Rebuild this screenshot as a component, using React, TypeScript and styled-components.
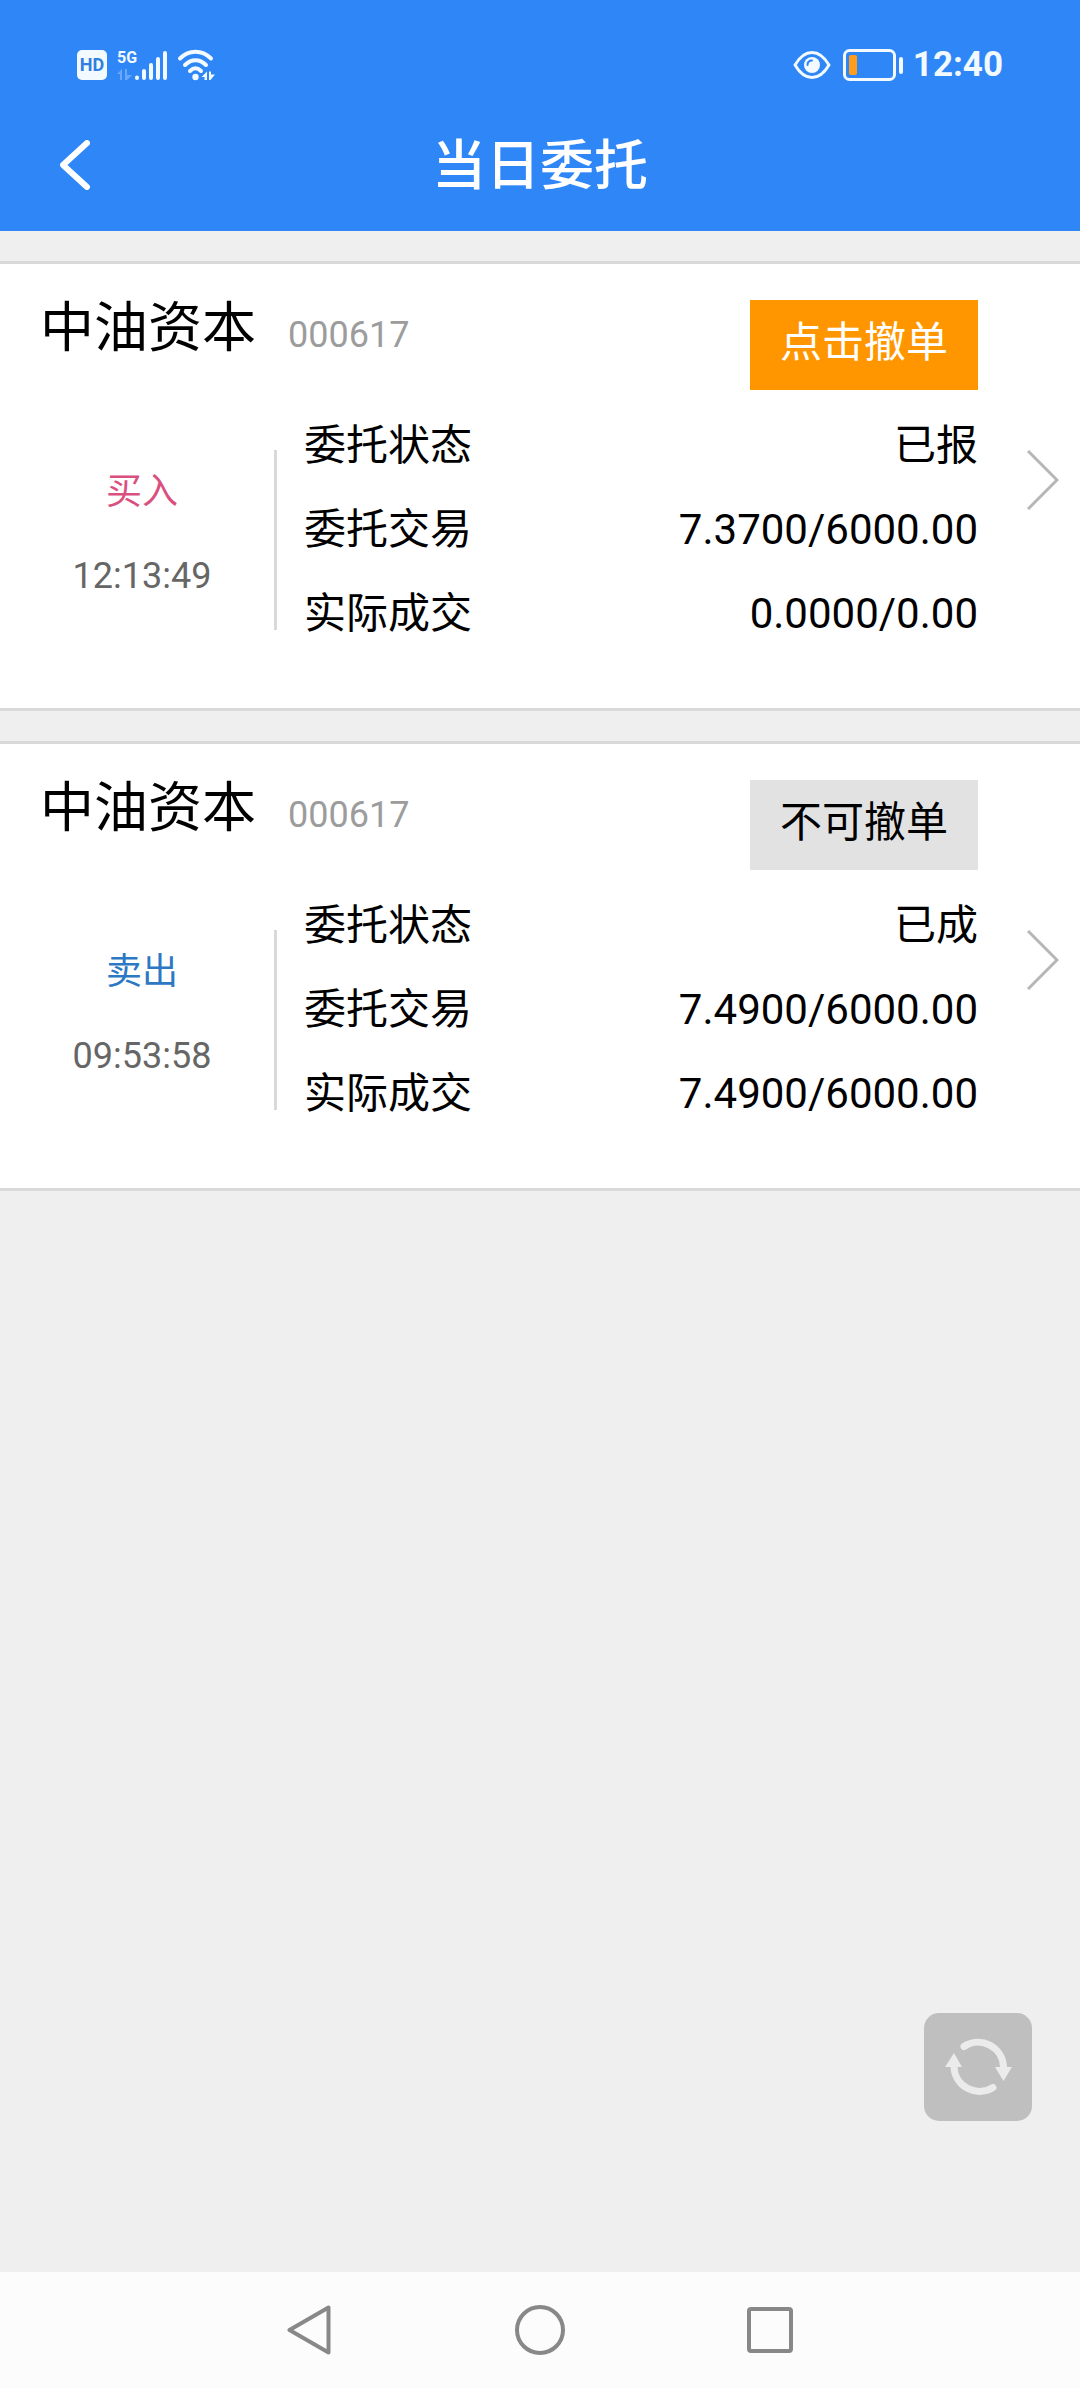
import React from 'react';
import styled, { createGlobalStyle } from 'styled-components';

const GlobalStyle = createGlobalStyle`
  * {
    box-sizing: border-box;
  }

  body {
    margin: 0;
    background: #efefef;
    color: #000;
    font-family: Roboto, 'Noto Sans CJK SC', sans-serif;
  }

  button {
    margin: 0;
    padding: 0;
    border: 0;
    background: none;
    color: inherit;
    font: inherit;
    cursor: pointer;
  }

  svg {
    display: block;
  }
`;

const Screen = styled.div`
  display: flex;
  flex-direction: column;
  min-height: 100vh;
`;

const Header = styled.header`
  background: #2f86f6;
  color: #fff;
`;

const StatusBar = styled.div`
  display: flex;
  align-items: center;
  justify-content: space-between;
  height: 97px;
  padding: 33px 77px 0;
  color: #f2f9ff;
`;

const StatusGroup = styled.div`
  display: flex;
  align-items: center;
  gap: 10px;
`;

const HdBadge = styled.span`
  display: flex;
  align-items: center;
  justify-content: center;
  width: 30px;
  height: 30px;
  border-radius: 5px;
  background: #f2f9ff;
  color: #2f7fe0;
  font-size: 18px;
  font-weight: 700;
  line-height: 30px;
`;

const Clock = styled.time`
  font-size: 35px;
  font-weight: 700;
  line-height: 40px;
`;

const TitleBar = styled.div`
  display: grid;
  grid-template-columns: 1fr auto 1fr;
  align-items: center;
  height: 134px;
  padding: 2px 60px 0;
`;

const BackButton = styled.button`
  justify-self: start;
`;

const Title = styled.h1`
  margin: 0;
  padding-top: 4px;
  font-size: 54px;
  font-weight: 500;
  line-height: 56px;
`;

const OrderList = styled.main`
  display: flex;
  flex: 1;
  flex-direction: column;
  gap: 30px;
  padding: 30px 0;
`;

const Card = styled.article`
  border: solid #d9d9d9;
  border-width: 3px 0;
  background: #fff;
`;

const CardHead = styled.div`
  display: flex;
  align-items: flex-start;
  justify-content: space-between;
  padding: 36px 102px 36px 40px;
`;

const Stock = styled.div`
  display: flex;
  align-items: baseline;
  gap: 32px;
  padding-top: 1px;
`;

const StockName = styled.h2`
  margin: 0;
  font-size: 54px;
  font-weight: 400;
  line-height: 56px;
`;

const StockCode = styled.span`
  color: #9c9c9c;
  font-size: 36px;
  line-height: 40px;
`;

const CancelButton = styled.button`
  height: 90px;
  padding: 0 30px 4px;
  background: #ff9600;
  color: #fff;
  font-size: 42px;
  line-height: 40px;

  &:disabled {
    background: #e2e2e2;
    color: #000;
    cursor: default;
  }
`;

const CardBody = styled.div`
  display: flex;
  align-items: flex-start;
  padding: 0 21px 74px 10px;
`;

const Side = styled.div`
  display: flex;
  flex-direction: column;
  align-items: center;
  gap: 44px;
  width: 264px;
  padding-top: 46px;
  font-size: 36px;
  line-height: 40px;
`;

const Direction = styled.span<{ $side: 'buy' | 'sell' }>`
  color: ${({ $side }) => ($side === 'buy' ? '#d9507f' : '#2d78c4')};
`;

const OrderTime = styled.time`
  color: #666;
`;

const Divider = styled.div`
  width: 3px;
  height: 180px;
  margin-top: 24px;
  background: #d9d9d9;
`;

const Details = styled.dl`
  display: flex;
  flex: 1;
  flex-direction: column;
  gap: 44px;
  margin: 0;
  padding-left: 27px;
  font-size: 42px;
  line-height: 40px;
`;

const Detail = styled.div`
  display: flex;
  justify-content: space-between;
`;

const Value = styled.dd`
  margin: 0;
`;

const OpenButton = styled.button`
  margin: 24px 0 0 49px;
`;

const RefreshButton = styled.button`
  position: fixed;
  right: 48px;
  bottom: 267px;
  width: 108px;
  height: 108px;
  border-radius: 15px;
  background: #bfbfbf;
`;

const SystemNav = styled.nav`
  display: flex;
  justify-content: center;
  height: 116px;
  background: #fcfcfc;
`;

const NavButton = styled.button`
  display: flex;
  align-items: center;
  justify-content: center;
  width: 230px;
`;

const SignalIcon = () => (
  <svg width="50" height="34" viewBox="0 0 50 34" fill="currentColor" aria-label="5G">
    <text x="0" y="15" fontFamily="'Liberation Sans Narrow', Roboto, sans-serif" fontSize="16" fontWeight="700">
      5G
    </text>
    <g opacity="0.3">
      <path d="M0 26 5 21V32H3V26ZM8 21H10V27H15L10 32H8Z" />
    </g>
    <g stroke="currentColor" strokeWidth="4" strokeLinecap="round">
      <path d="M20 29.500V30M27 23V30M34 17V30M41 11V30M48 5V30" />
    </g>
  </svg>
);

const WifiIcon = () => (
  <svg width="40" height="34" viewBox="0 0 40 34" fill="none" stroke="currentColor" aria-label="Wi-Fi">
    <g strokeWidth="4" strokeLinecap="round">
      <path d="M3 10.500C12 1.500 25 1.500 34 10.500" />
      <path d="M8 17C14.500 10.500 22.500 10.500 29 17" />
      <path d="M13 23C16.500 19.500 20.500 19.500 24 23" />
    </g>
    <circle cx="18.500" cy="29" r="3.200" fill="currentColor" stroke="none" />
    <path d="M24.500 29 30 23.500V32H27.500V29ZM32 23.500H34V26.500H38L33.500 32H32Z" fill="currentColor" stroke="none" />
  </svg>
);

const EyeIcon = () => (
  <svg width="40" height="30" viewBox="0 0 40 30" aria-label="护眼模式">
    <path
      d="M2 15C7 6.500 12.500 2.500 19 2.500S31 6.500 36 15C31 23.500 25.500 27.500 19 27.500S7 23.500 2 15Z"
      fill="none"
      stroke="currentColor"
      strokeWidth="3"
      strokeLinejoin="round"
    />
    <circle cx="19" cy="15" r="8" fill="currentColor" />
    <path d="M14.500 15C14.500 12 16.500 10.500 19 10.500" fill="none" stroke="#2f86f6" strokeWidth="2" strokeLinecap="round" />
  </svg>
);

const BatteryIcon = () => (
  <svg width="60" height="32" viewBox="0 0 60 32" aria-label="电量低">
    <rect x="1.500" y="1.500" width="50" height="29" rx="5" fill="none" stroke="currentColor" strokeWidth="3" />
    <rect x="6" y="6" width="8" height="20" rx="2" fill="#ff9c1c" />
    <rect x="56" y="8" width="4" height="17" rx="2" fill="currentColor" />
  </svg>
);

const BackIcon = () => (
  <svg width="30" height="50" viewBox="0 0 30 50" fill="none" stroke="#fff" strokeWidth="6" strokeLinecap="round" strokeLinejoin="round">
    <path d="M27 3 3 25 27 47" />
  </svg>
);

const ChevronIcon = () => (
  <svg width="32" height="60" viewBox="0 0 32 60" fill="none" stroke="#b6b6b6" strokeWidth="3">
    <path d="M1 1 30 30 1 59" />
  </svg>
);

const RefreshIcon = () => (
  <svg width="108" height="108" viewBox="0 0 108 108">
    <g fill="none" stroke="#ebebeb" strokeWidth="7" strokeLinecap="round">
      <path d="M40 33.500A25.500 25.500 0 0 1 79.500 54" />
      <path d="M69 74.500A25.500 25.500 0 0 1 30 54" />
    </g>
    <path d="M71 54H88L79.500 68ZM21 54H38L30 40Z" fill="#ebebeb" />
  </svg>
);

type IconShape = 'back' | 'home' | 'recent';

const NavIcon = ({ shape }: { shape: IconShape }) => (
  <svg width="50" height="50" viewBox="0 0 50 50" fill="none" stroke="#888" strokeWidth="4" strokeLinejoin="round">
    {shape === 'back' && <path d="M43.500 2.500V47.500L4.500 25Z" />}
    {shape === 'home' && <circle cx="25" cy="25" r="23" />}
    {shape === 'recent' && <rect x="4" y="4" width="42" height="42" rx="2" />}
  </svg>
);

interface Order {
  name: string;
  code: string;
  side: 'buy' | 'sell';
  time: string;
  cancellable: boolean;
  status: string;
  ordered: string;
  filled: string;
}

const orders: Order[] = [
  {
    name: '中油资本',
    code: '000617',
    side: 'buy',
    time: '12:13:49',
    cancellable: true,
    status: '已报',
    ordered: '7.3700/6000.00',
    filled: '0.0000/0.00',
  },
  {
    name: '中油资本',
    code: '000617',
    side: 'sell',
    time: '09:53:58',
    cancellable: false,
    status: '已成',
    ordered: '7.4900/6000.00',
    filled: '7.4900/6000.00',
  },
];

const OrderCard = ({ order }: { order: Order }) => (
  <Card>
    <CardHead>
      <Stock>
        <StockName>{order.name}</StockName>
        <StockCode>{order.code}</StockCode>
      </Stock>
      <CancelButton type="button" disabled={!order.cancellable}>
        {order.cancellable ? '点击撤单' : '不可撤单'}
      </CancelButton>
    </CardHead>
    <CardBody>
      <Side>
        <Direction $side={order.side}>{order.side === 'buy' ? '买入' : '卖出'}</Direction>
        <OrderTime>{order.time}</OrderTime>
      </Side>
      <Divider />
      <Details>
        <Detail>
          <dt>委托状态</dt>
          <Value>{order.status}</Value>
        </Detail>
        <Detail>
          <dt>委托交易</dt>
          <Value>{order.ordered}</Value>
        </Detail>
        <Detail>
          <dt>实际成交</dt>
          <Value>{order.filled}</Value>
        </Detail>
      </Details>
      <OpenButton type="button" aria-label="查看详情">
        <ChevronIcon />
      </OpenButton>
    </CardBody>
  </Card>
);

export default function App() {
  return (
    <Screen>
      <GlobalStyle />
      <Header>
        <StatusBar>
          <StatusGroup>
            <HdBadge>HD</HdBadge>
            <SignalIcon />
            <WifiIcon />
          </StatusGroup>
          <StatusGroup>
            <EyeIcon />
            <BatteryIcon />
            <Clock>12:40</Clock>
          </StatusGroup>
        </StatusBar>
        <TitleBar>
          <BackButton type="button" aria-label="返回">
            <BackIcon />
          </BackButton>
          <Title>当日委托</Title>
        </TitleBar>
      </Header>
      <OrderList>
        {orders.map((order) => (
          <OrderCard key={order.time} order={order} />
        ))}
      </OrderList>
      <RefreshButton type="button" aria-label="刷新">
        <RefreshIcon />
      </RefreshButton>
      <SystemNav>
        <NavButton type="button" aria-label="后退">
          <NavIcon shape="back" />
        </NavButton>
        <NavButton type="button" aria-label="主屏幕">
          <NavIcon shape="home" />
        </NavButton>
        <NavButton type="button" aria-label="最近任务">
          <NavIcon shape="recent" />
        </NavButton>
      </SystemNav>
    </Screen>
  );
}
